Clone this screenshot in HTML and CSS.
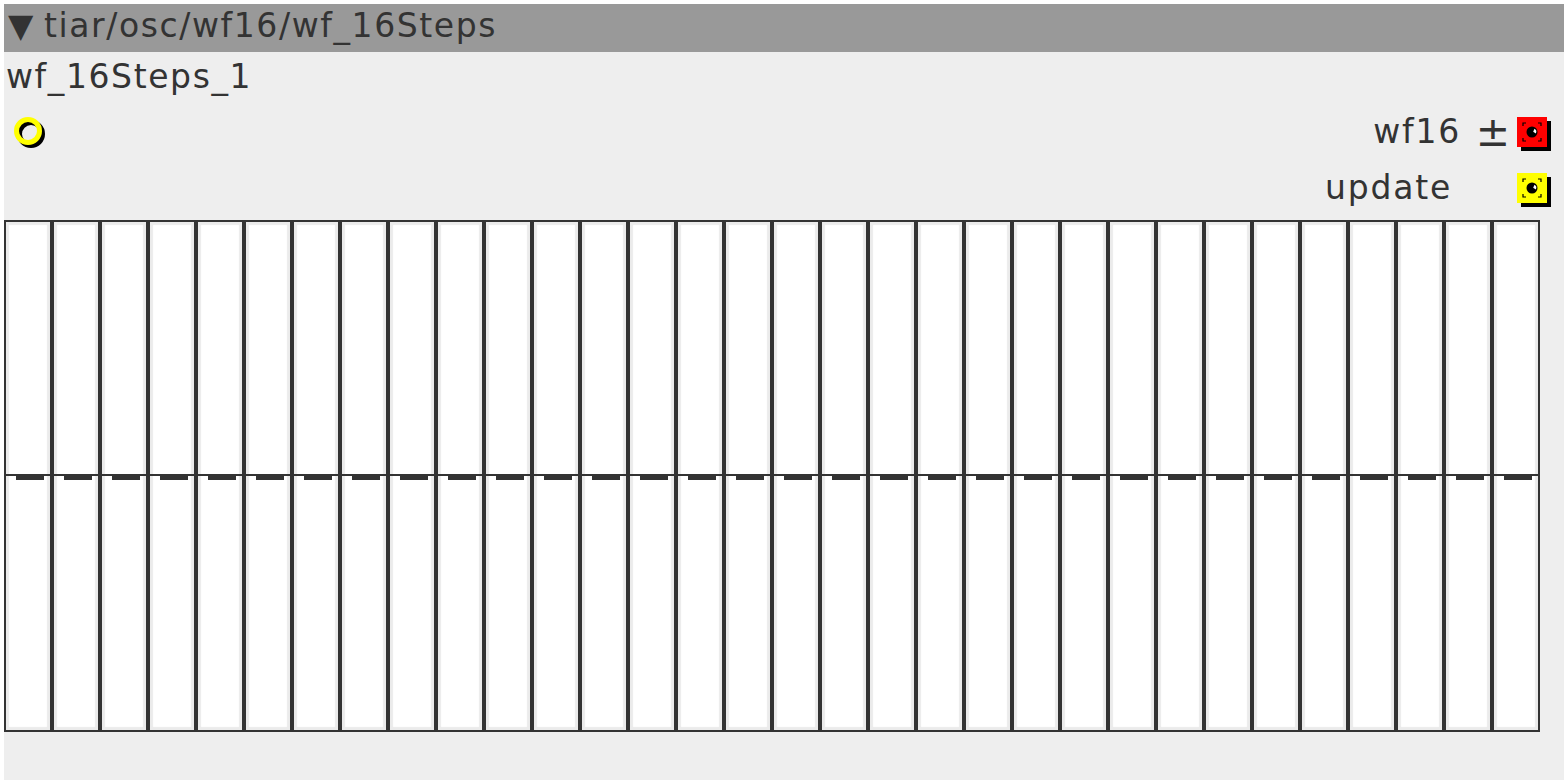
FILE: index.html
```html
<!DOCTYPE html>
<html>
<head>
    <title>wf_16Steps</title>
    <link rel="stylesheet" href="styles.css">
</head>
<body>
    <div class="node">
        <div class="hdr"><span class="arrow">&#9660; </span>tiar/osc/wf16/wf_16Steps</div>
        <div class="name">wf_16Steps_1</div>
        <div class="io">
            <div class="ins">
                <svg class="port-in" width="40" height="40" viewBox="0 0 40 40">
                    <circle cx="18" cy="19" r="11.5" fill="none" stroke="#000" stroke-width="5"/>
                    <circle cx="15" cy="16" r="11.5" fill="none" stroke="#ff0" stroke-width="5"/>
                </svg>
            </div>
            <div class="outs">
                <div class="out">
                    <span class="lbl">wf16</span>
                    <span class="sign">&plusmn;</span>
                    <svg class="port-out" width="36" height="36" viewBox="0 0 36 36">
                        <rect x="4" y="4" width="30" height="30" fill="#000"/>
                        <rect x="0" y="0" width="30" height="30" fill="#f00"/>
                        <g stroke="#000" stroke-width="1.2" fill="none">
                            <path d="M6 9V6H9M21 6H24V9M24 21V24H21M9 24H6V21"/>
                        </g>
                        <circle cx="15" cy="15" r="5.5" fill="#000"/>
                        <path d="M17.5 11.8A3.6 3.6 0 0 1 18.8 16.6L16.2 14.8Z" fill="#fff"/>
                    </svg>
                </div>
                <div class="out">
                    <span class="lbl">update</span>
                    <span class="sign wide"></span>
                    <svg class="port-out" width="36" height="36" viewBox="0 0 36 36">
                        <rect x="4" y="4" width="30" height="30" fill="#000"/>
                        <rect x="0" y="0" width="30" height="30" fill="#ff0"/>
                        <g stroke="#000" stroke-width="1.2" fill="none">
                            <path d="M6 9V6H9M21 6H24V9M24 21V24H21M9 24H6V21"/>
                        </g>
                        <circle cx="15" cy="15" r="5.5" fill="#000"/>
                        <path d="M17.5 11.8A3.6 3.6 0 0 1 18.8 16.6L16.2 14.8Z" fill="#fff"/>
                    </svg>
                </div>
            </div>
        </div>
        <div class="steps" id="steps"></div>
    </div>

    <script>
        // 32 sliders, all at zero
        var steps = document.getElementById("steps");
        for (var i = 0; i < 32; i++) {
            var s = document.createElement("div");
            s.className = "step";
            s.innerHTML = '<div class="top"></div><div class="zero"></div><div class="bar"></div>';
            steps.appendChild(s);
        }
    </script>
</body>
</html>
```

FILE: styles.css
```css
html, body
{
    margin: 0;
    padding: 0;
    background-color: #fff;
}
body
{
    font-family: "DejaVu Sans", Verdana, sans-serif;
    color: #333;
    font-size: 33px;
}
.node
{
    margin: 4px;
    width: 1560px;
    height: 776px;
    background-color: #eee;
}
.hdr
{
    height: 48px;
    line-height: 44px;
    background-color: #999;
    padding-left: 4px;
    white-space: nowrap;
    letter-spacing: 1.6px;
}
.arrow
{
    letter-spacing: 0;
}
.name
{
    height: 50px;
    line-height: 50px;
    padding-left: 2px;
    letter-spacing: 1.6px;
}
.io
{
    display: flex;
    justify-content: space-between;
    height: 118px;
}
.ins
{
    padding: 13px 0 0 9px;
}
.outs
{
    display: flex;
    flex-direction: column;
    padding-top: 12px;
    gap: 20px;
}
.out
{
    display: flex;
    justify-content: flex-end;
    align-items: flex-start;
    height: 36px;
    line-height: 36px;
}
.lbl
{
    letter-spacing: 1.8px;
}
.sign
{
    width: 56px;
    text-align: right;
    padding-right: 7px;
    box-sizing: border-box;
    font-size: 41px;
}
.sign.wide
{
    width: 65px;
}
.port-out
{
    margin-top: 3px;
    margin-right: 11px;
}
.steps
{
    display: flex;
}
.step
{
    width: 48px;
    height: 512px;
    box-sizing: border-box;
    border: 2px solid #333;
    background-color: #fff;
    box-shadow: inset 0 0 1px 3px #ebebeb;
}
.top
{
    height: 252px;
}
.zero
{
    height: 2px;
    margin: 0 -2px;
    background-color: #333;
}
.bar
{
    height: 4px;
    width: 28px;
    margin-left: 10px;
    background-color: #333;
}
```
